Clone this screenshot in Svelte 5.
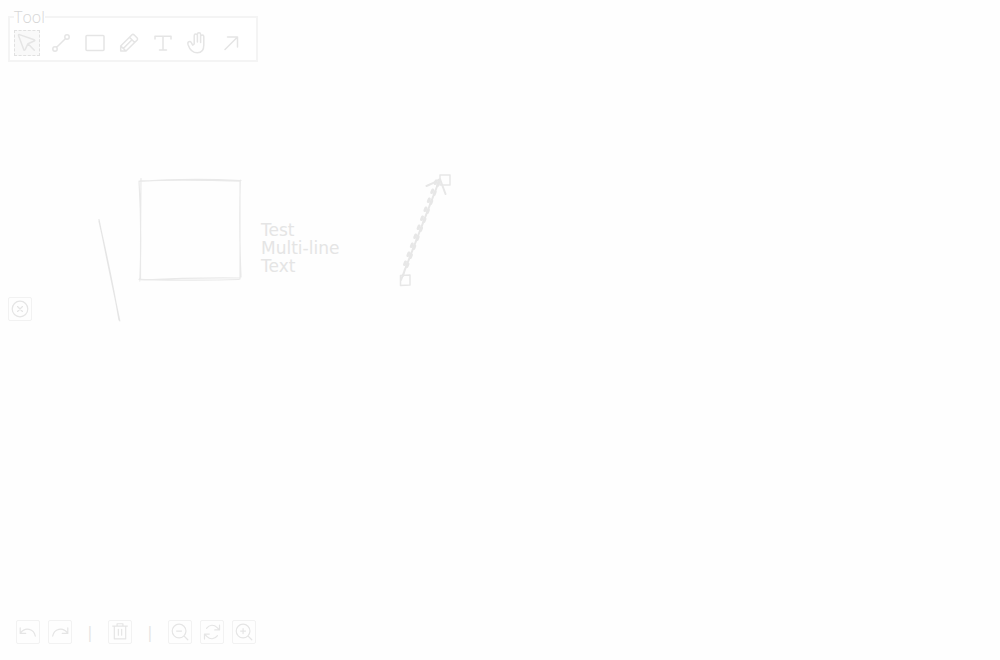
<script>
  let selected = $state('select');

  const tools = [
    { id: 'select', label: 'Selection', d: 'M4.5 5.5 Q4.3 4.3 5.5 4.6 L20.2 9.8 Q21.3 10.4 20.2 11 L14 13.7 L11 19.8 Q10.2 20.8 9.7 19.6 Z M14 13.7 L20.3 20.3' },
    { id: 'line', label: 'Line', d: 'M8.7 17.3 L17.3 8.7 M9.2 19 a2.2 2.2 0 1 1 -4.4 0 a2.2 2.2 0 1 1 4.4 0 M21.2 7 a2.2 2.2 0 1 1 -4.4 0 a2.2 2.2 0 1 1 4.4 0' },
    { id: 'rectangle', label: 'Rectangle', d: 'M5 5.5 H21 Q22 5.5 22 6.5 V19.5 Q22 20.5 21 20.5 H5 Q4 20.5 4 19.5 V6.5 Q4 5.5 5 5.5 Z' },
    { id: 'pencil', label: 'Pencil', d: 'M4.7 21 V16 L16 4.7 Q17 4 18 4.8 L21.2 8 Q22 9 21.2 10 L10 21 Z M4.7 16 L10 21 M13.5 7.3 L18.7 12.5 M7.3 18.5 L16 9.8' },
    { id: 'text', label: 'Text', d: 'M5 9 V6.2 H21 V9 M13 6.2 V20 M9.5 20 H16.5' },
    { id: 'hand', label: 'Hand', d: 'M10.2 14 V5.7 a1.6 1.6 0 0 1 3.2 0 V12 M13.4 5 V4.3 a1.6 1.6 0 0 1 3.2 0 V12.5 M16.6 6.5 a1.6 1.6 0 0 1 3.2 0 V15 Q19.8 22.8 13.4 22.8 C7.5 22.8 5.5 19 4 14.4 C3.2 11.6 6.2 10.8 7.3 12.6 L8.7 15.2 L10.2 14' },
    { id: 'arrow', label: 'Arrow', d: 'M7 19.5 L19.5 7 M9.5 7 H19.5 V17' }
  ];

  const actions = [
    { label: 'Undo', d: 'M3.5 7.5 V13.5 H9.5 M3.8 13 C9 6.2 18.5 8.2 20 16.5' },
    { label: 'Redo', d: 'M20.5 7.5 V13.5 H14.5 M20.2 13 C15 6.2 5.5 8.2 4 16.5' },
    null,
    { label: 'Delete', d: 'M4 5.5 H20 M5.8 5.5 V19.5 H18.2 V5.5 M8.8 5.5 V3 H15.2 V5.5 M10.2 9 V15.5 M13.8 9 V15.5' },
    null,
    { label: 'Zoom out', d: 'M18.5 11 a7.5 7.5 0 1 1 -15 0 a7.5 7.5 0 1 1 15 0 M16.5 16.5 L20.5 20.5 M8.3 11 H13.7' },
    { label: 'Reset zoom', d: 'M6 8 C9.2 3.7 14.2 3.7 17.4 7 L20 9.5 M20.2 4.5 V9.7 H15 M3.8 19.5 V14.3 H9 M4 14.5 L6.6 17 C9.8 20.3 14.8 20.3 18 16' },
    { label: 'Zoom in', d: 'M18.5 11 a7.5 7.5 0 1 1 -15 0 a7.5 7.5 0 1 1 15 0 M16.5 16.5 L20.5 20.5 M8.3 11 H13.7 M11 8.3 V13.7' }
  ];

  // Short strokes along the selected arrow, from its tail to its tip.
  const beads = Array.from({ length: 10 }, (_, i) => ({
    x: 406 + i * 3.4,
    y: 264 - i * 9
  }));
</script>

<main>
  <svg class="canvas" aria-hidden="true">
    <path class="stroke" d="M99 219.5 Q106 255 119.8 321 M99 221 Q112 278 119 320" />
    <path class="box" d="M139 181.5 Q185 178 241 180.5 M140 180.8 Q190 179.5 240 181.2 M240.3 180 Q239 230 241 277 M240 181 Q240 230 240 279 M140 280 Q190 277.5 240 278 M139 279.3 Q195 281 239 279.5 M141 178.5 Q140.5 225 140.5 280 M139 181 Q142 230 139.8 281" />
    <g class="text">
      <text x="261" y="236">Test</text>
      <text x="261" y="254">Multi-line</text>
      <text x="261" y="272">Text</text>
    </g>
    <g class="arrow">
      <path d="M401 280 L439.5 180 M403 276 L405 269 M426.5 186 Q434 183 440 179 L445.5 194" />
      {#each beads as bead}
        <path class="bead" d="M{bead.x - 1.5} {bead.y + 0.5} l1 -2.5 M{bead.x + 1} {bead.y + 2.5} l1 -2.5" />
      {/each}
      <path class="handle" d="M440 175 H450 V185 H440 Z M400.5 275.5 L410 275 V285 L400.5 285.5 Z" />
    </g>
  </svg>

  <fieldset>
    <legend>Tool</legend>
    <div class="tools">
      {#each tools as tool}
        <label class:active={selected === tool.id}>
          <input type="radio" name="tool" value={tool.id} bind:group={selected} aria-label={tool.label} />
          <svg viewBox="0 0 26 26" aria-hidden="true"><path d={tool.d} /></svg>
        </label>
      {/each}
    </div>
  </fieldset>

  <section>
    <button type="button" aria-label="Remove selected">
      <svg viewBox="0 0 24 24" aria-hidden="true">
        <circle cx="12" cy="12" r="8.5" />
        <path d="M9.3 9.3 L14.7 14.7 M14.7 9.3 L9.3 14.7" />
      </svg>
    </button>
  </section>

  <footer>
    {#each actions as action}
      {#if action}
        <button type="button" aria-label={action.label}>
          <svg viewBox="0 0 24 24" aria-hidden="true"><path d={action.d} /></svg>
        </button>
      {:else}
        <span>|</span>
      {/if}
    {/each}
  </footer>
</main>

<style>
  :global(body) {
    margin: 0;
    background: #fefefe;
  }
  main {
    box-sizing: border-box;
    position: relative;
    display: flex;
    flex-direction: column;
    align-items: flex-start;
    min-height: 100vh;
    padding: 8px 8px 16px;
    color: #e2e2e2;
    font: 16px/18px "Open Sans", sans-serif;
  }
  svg {
    display: block;
    fill: none;
    stroke: #e5e5e5;
    stroke-linecap: round;
    stroke-linejoin: round;
  }
  .canvas {
    position: absolute;
    inset: 0;
    width: 100%;
    height: 100%;
  }
  .stroke {
    stroke-width: 1.2;
  }
  .box {
    stroke: #e9e9e9;
    stroke-width: 1.2;
  }
  .text {
    fill: #e5e5e5;
    stroke: none;
    font: 17px/17px "DejaVu Sans", sans-serif;
  }
  .arrow {
    stroke: #e7e7e7;
    stroke-width: 2;
  }
  .bead {
    stroke-width: 3;
  }
  .handle {
    stroke-width: 1.5;
  }
  fieldset,
  section,
  footer {
    position: relative;
  }
  fieldset {
    margin: 0;
    padding: 4px 12px 4px 4px;
    border: 2px solid #f4f4f4;
    background: #fff;
    min-width: 0;
  }
  legend {
    padding: 0;
    color: #d6d6d6;
    font-weight: 300;
  }
  .tools {
    display: flex;
    gap: 8px;
  }
  label {
    position: relative;
    box-sizing: border-box;
    width: 26px;
    height: 26px;
    cursor: pointer;
  }
  label.active {
    background: #f9f9f9;
    outline: 1px dashed #e1e1e1;
    outline-offset: -1px;
  }
  label svg {
    width: 26px;
    height: 26px;
    stroke-width: 1.5;
  }
  input {
    position: absolute;
    inset: 0;
    margin: 0;
    opacity: 0;
  }
  section {
    flex: 1;
    display: flex;
    align-items: center;
    padding-bottom: 64px;
  }
  button {
    box-sizing: border-box;
    width: 24px;
    height: 24px;
    padding: 0;
    border: 1px solid #f2f2f2;
    border-radius: 2px;
    background: #fefefe;
  }
  button svg {
    width: 22px;
    height: 22px;
    stroke-width: 1.3;
  }
  footer {
    display: flex;
    align-items: center;
    gap: 8px;
    padding-left: 8px;
  }
  span {
    width: 20px;
    text-align: center;
  }
</style>
